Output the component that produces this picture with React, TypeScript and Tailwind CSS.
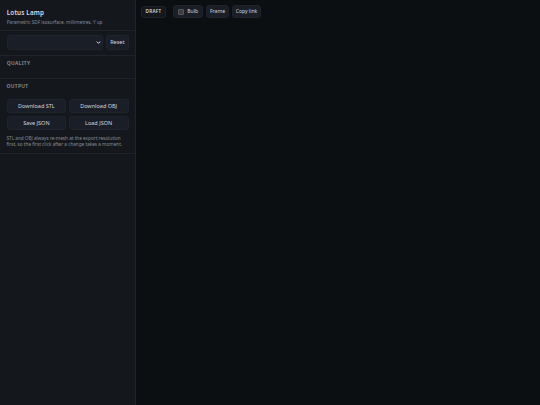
import type { ReactNode } from 'react'

const Button = ({ children, className = '' }: { children: ReactNode; className?: string }) => (
  <button
    className={`flex items-center justify-center whitespace-nowrap rounded-[3px] border border-[#1e232c] bg-[#1a1e27] text-[#d3d7de] ${className}`}
  >
    {children}
  </button>
)

const SectionTitle = ({ children }: { children: ReactNode }) => (
  <h2 className="text-[5px] leading-[8px] font-semibold tracking-[0.3px] text-[#8d949e] uppercase">
    {children}
  </h2>
)

const Sidebar = () => (
  <aside className="flex w-[136px] shrink-0 flex-col border-r border-[#20252b] bg-[#14181d] text-[5.5px]">
    <header className="h-[31px] border-b border-[#1f242a] pt-[7.5px] pl-[6.75px]">
      <h1 className="text-[6.35px] leading-[9px] font-semibold tracking-[0.14px] text-[#d9dde3]">
        Lotus Lamp
      </h1>
      <p className="pt-[1px] text-[4.65px] leading-[8px] whitespace-nowrap text-[#858c96]">
        Parametric SDF isosurface, millimetres, Y up
      </p>
    </header>

    <div className="flex h-[25px] gap-[3px] border-b border-[#1f242a] pt-[4px] pr-[6px] pl-[6.5px]">
      <div className="flex h-[15px] flex-1 items-center justify-end rounded-[3px] border border-[#1e232c] bg-[#1a1e27] pr-[1px]">
        <svg viewBox="0 0 5 5" className="h-[5px] w-[5px]" fill="none" stroke="#e2e5ea" strokeWidth="1">
          <path d="M0.8 1.6 L2.5 3.3 L4.2 1.6" />
        </svg>
      </div>
      <Button className="h-[15px] w-[23.5px]">Reset</Button>
    </div>

    <section className="h-[23px] border-b border-[#1f242a] px-[6.75px] pt-[3px]">
      <SectionTitle>Quality</SectionTitle>
    </section>

    <section className="h-[75px] border-b border-[#1f242a] px-[6.5px] pt-[3px]">
      <SectionTitle>Output</SectionTitle>
      <div className="mt-[9px] grid grid-cols-2 gap-x-[2.5px] gap-y-[3px]">
        <Button className="h-[14px]">Download STL</Button>
        <Button className="h-[14px]">Download OBJ</Button>
        <Button className="h-[14px]">Save JSON</Button>
        <Button className="h-[14px]">Load JSON</Button>
      </div>
      <p className="pt-[4.5px] text-[4.67px] leading-[6.5px] whitespace-nowrap text-[#858c96]">
        STL and OBJ always re-mesh at the export resolution
        <br />
        first, so the first click after a change takes a moment.
      </p>
    </section>
  </aside>
)

const Toolbar = () => (
  <div className="flex items-center gap-[3px] pt-[5px] pl-[5px] text-[5.05px]">
    <span className="mr-[4px] flex h-[12px] w-[25px] items-center justify-center rounded-[3px] border border-[#1e232c] bg-[#14181d] text-[4.65px] font-semibold tracking-[0.27px] text-[#d3d7de]">
      DRAFT
    </span>
    <Button className="h-[13px] w-[30px] gap-[3.5px]">
      <span className="size-[6px] rounded-[1px] border border-[#55575b] bg-[#3b3b3b]" />
      Bulb
    </Button>
    <Button className="h-[13px] w-[23px]">Frame</Button>
    <Button className="h-[13px] w-[29px]">Copy link</Button>
  </div>
)

const App = () => (
  <div className="flex h-screen w-screen overflow-hidden bg-[#0b0f12] font-['Noto_Sans',sans-serif]">
    <Sidebar />
    <main className="min-w-0 flex-1">
      <Toolbar />
    </main>
  </div>
)

export default App
